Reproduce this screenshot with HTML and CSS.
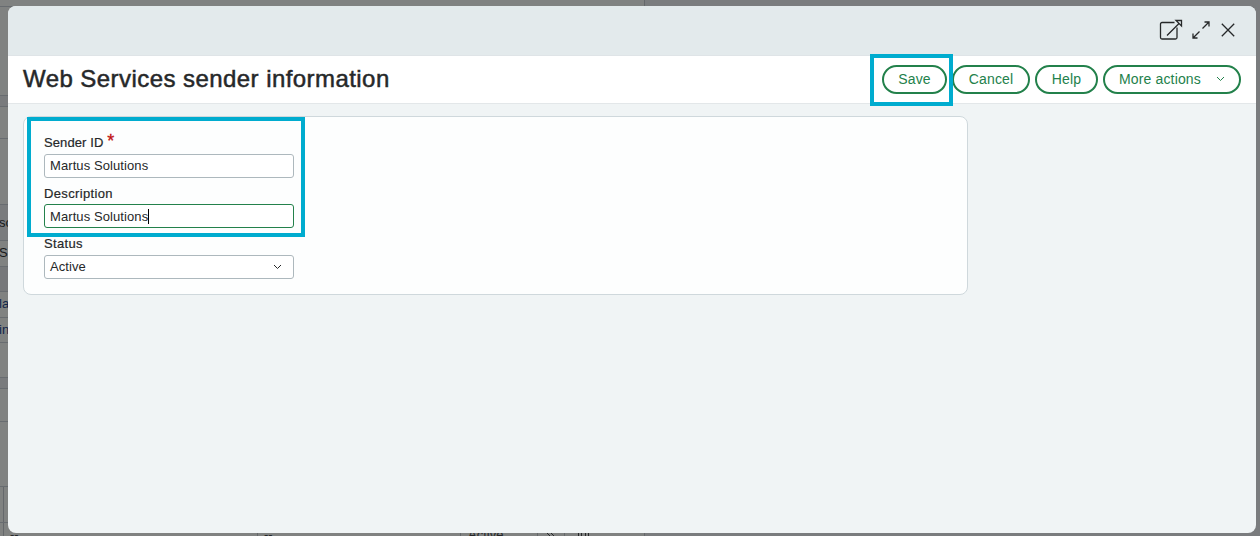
FILE: index.html
```html
<!DOCTYPE html>
<html lang="en">
<head>
  <meta charset="UTF-8">
  <meta name="viewport" content="width=device-width, initial-scale=1.0">
  <title>Web Services sender information</title>
  <link rel="stylesheet" href="styles.css">
</head>
<body>
  <!-- page behind the dialog -->
  <div class="page">
    <div class="list">
      <div class="row row-top"></div>
      <div class="row row-88"></div>
      <div class="row row-gap"></div>
      <div class="row row-32"></div>
      <div class="row row-66"></div>
      <div class="row row-head">so</div>
      <div class="row row-item">S</div>
      <div class="row row-item row-dark"></div>
      <div class="row row-item row-link">la</div>
      <div class="row row-item row-link">in</div>
      <div class="row row-35"></div>
      <div class="row row-gap"></div>
      <div class="row row-33"></div>
      <div class="row row-65"></div>
      <div class="row row-cells row-cells-head">
        <span class="cell cell-edge"></span>
      </div>
      <div class="row-cells">
        <span class="cell cell-edge"></span>
        <span class="cell cell-id">--</span>
        <span class="cell cell-name">--</span>
        <span class="cell cell-status">Active</span>
        <span class="cell cell-edit">
          <svg width="9" height="9" viewBox="0 0 9 9"><path d="M0 0l5 5M4 0l5 5" /></svg>
        </span>
        <span class="cell cell-delete">
          <svg width="12" height="9" viewBox="0 0 12 9"><path d="M.5 0v9M3.5 0v9M7.5 0v9M10.5 0v9" /></svg>
        </span>
      </div>
    </div>
    <div class="rest"></div>
  </div>

  <div class="dialog">
    <div class="dialog-bar">
      <svg class="icon-popout" width="25" height="22" viewBox="0 0 25 22">
        <path d="M15.5 3.5H3a1.5 1.5 0 0 0-1.5 1.5v13.5a1.5 1.5 0 0 0 1.5 1.5h13.5a1.5 1.5 0 0 0 1.5-1.5V8.5" />
        <path d="M8 16.500L20 4.500M17 1.500h5.500v5.500l-5.500-5.500z" />
      </svg>
      <svg class="icon-expand" width="18" height="18" viewBox="0 0 18 18">
        <path d="M10.500 7.500L17 1M12.500 1H17v4.500M7.500 10.500L1 17M1 12.500V17h4.500" />
      </svg>
      <svg class="icon-close" width="14" height="14" viewBox="0 0 14 14">
        <path d="M.8.8l12.400 12.400M13.200.8L.8 13.200" />
      </svg>
    </div>

    <div class="title-bar">
      <h1>Web Services sender information</h1>
      <div class="actions">
        <button class="btn btn-save">Save</button>
        <button class="btn btn-cancel">Cancel</button>
        <button class="btn btn-help">Help</button>
        <button class="btn btn-more">
          <span>More actions</span>
          <svg width="9" height="6" viewBox="0 0 9 6"><path d="M1 1l3.500 3.500L8 1" /></svg>
        </button>
      </div>
    </div>

    <div class="content">
      <div class="card">
        <div class="label label-first">Sender ID <span class="required">*</span></div>
        <div class="field">Martus Solutions</div>
        <div class="label">Description</div>
        <div class="field focused">Martus Solutions<span class="caret"></span></div>
        <div class="label label-status">Status</div>
        <div class="field select">
          <span>Active</span>
          <svg width="9" height="6" viewBox="0 0 9 6"><path d="M1 1l3.500 3.500L8 1" /></svg>
        </div>
      </div>
    </div>
  </div>

  <div class="highlight highlight-fields"></div>
  <div class="highlight highlight-save"></div>
</body>
</html>
```
FILE: styles.css
```css
* {
  box-sizing: border-box;
}
body {
  margin: 0;
  width: 1260px;
  height: 536px;
  overflow: hidden;
  position: relative;
  font-family: "Liberation Sans", Arial, sans-serif;
  font-size: 13px;
  color: #262829;
}
svg {
  display: block;
  fill: none;
  stroke: currentColor;
}

/* dimmed page */
.page {
  display: flex;
  height: 536px;
  overflow: hidden;
  background: #7a7c7e;
}
.list {
  width: 645px;
  flex: none;
  border-right: 1px solid #65686b;
  background: #808281;
}
.row {
  border-bottom: 1px solid #686c70;
  color: #17191a;
}
.row-top {
  height: 7px;
}
.row-88 { height: 89px; }
.row-gap {
  height: 11px;
  background: #797b7d;
}
.row-32 { height: 32px; }
.row-33 { height: 33px; }
.row-35 { height: 35px; }
.row-65 { height: 65px; }
.row-66 { height: 66px; }
.row-head {
  height: 36px;
  line-height: 36px;
  text-indent: -5px;
  background: #797b7d;
}
.row-head, .row-item {
  padding-left: 4px;
}
.row-item {
  height: 25.500px;
  line-height: 24px;
  text-indent: -5px;
}
.row-dark {
  background: #76787a;
}
.row-link {
  color: #10264a;
}
.row-cells {
  display: flex;
  height: 50px;
}
.row-cells-head {
  height: 36px;
}
.cell {
  flex: none;
  padding-top: 4px;
  border-right: 1px solid #65686b;
}
.cell-edge { width: 4px; }
.cell-id { width: 254px; padding-left: 6px; }
.cell-name { width: 203px; padding-left: 6px; }
.cell-status { width: 77px; padding-left: 7px; }
.cell-edit { width: 27px; padding: 10px 0 0 9px; }
.cell-delete { width: 79px; padding: 10px 0 0 13px; border-right: 0; }

/* dialog */
.dialog {
  position: absolute;
  left: 8px;
  top: 6px;
  width: 1248px;
  height: 527px;
  display: flex;
  flex-direction: column;
  border-radius: 8px;
  overflow: hidden;
  background: #f0f4f5;
}
.dialog-bar {
  height: 50px;
  flex: none;
  display: flex;
  justify-content: flex-end;
  align-items: center;
  padding: 0 21px 2px 0;
  background: #e3eaec;
  border-bottom: 1px solid #dfe4e7;
  stroke-width: 1.300;
}
.icon-popout {
  margin: 0 8px 0 0;
}
.icon-expand {
  margin-right: 11px;
}
.title-bar {
  height: 48px;
  flex: none;
  display: flex;
  justify-content: space-between;
  align-items: center;
  padding: 0 15px;
  background: #fff;
  border-bottom: 1px solid #e3e7e9;
}
h1 {
  margin: 0;
  padding-bottom: 2px;
  font-size: 24px;
  font-weight: 400;
  letter-spacing: 0.440px;
  -webkit-text-stroke: 0.500px #262829;
  white-space: nowrap;
}
.actions {
  display: flex;
  gap: 5px;
}
.btn {
  height: 29px;
  padding: 0 0 2px;
  border: 2px solid #23814b;
  border-radius: 15px;
  background: #fff;
  color: #23814b;
  font-family: inherit;
  font-size: 14px;
  letter-spacing: 0.150px;
}
.btn-save { width: 65px; }
.btn-cancel { width: 78px; }
.btn-help { width: 63px; }
.btn-more {
  width: 138px;
  display: flex;
  justify-content: space-between;
  align-items: center;
  padding: 0 14px 2px;
}
.content {
  padding: 12px 15px;
}
.card {
  width: 945px;
  height: 179px;
  padding: 14px 20px;
  border: 1px solid #cfd8dc;
  border-radius: 8px;
  background: #fdfefe;
}
.label {
  height: 26px;
  padding-top: 7px;
  line-height: 17px;
  letter-spacing: 0.350px;
  -webkit-text-stroke: 0.200px #262829;
}
.label-first {
  height: 23px;
  padding-top: 2px;
  letter-spacing: 0.100px;
}
.label-status {
  height: 27px;
}
.required {
  display: inline-block;
  height: 15px;
  color: #c01010;
  font-size: 18px;
  -webkit-text-stroke: 0.300px #c01010;
}
.field {
  display: flex;
  align-items: center;
  width: 250px;
  height: 24px;
  padding: 0 5px 1px;
  border: 1px solid #adb8bd;
  border-radius: 3px;
  background: #fff;
  letter-spacing: 0.090px;
}
.focused {
  padding-bottom: 0;
  border-color: #23814b;
}
.caret {
  width: 1px;
  height: 15px;
  background: #000;
}
.select {
  justify-content: space-between;
  padding-right: 11px;
}

/* callout frames */
.highlight {
  position: absolute;
  border: 4px solid #00accf;
}
.highlight-fields {
  left: 27px;
  top: 117px;
  width: 278px;
  height: 120px;
}
.highlight-save {
  left: 870px;
  top: 54px;
  width: 83px;
  height: 52px;
}
```
